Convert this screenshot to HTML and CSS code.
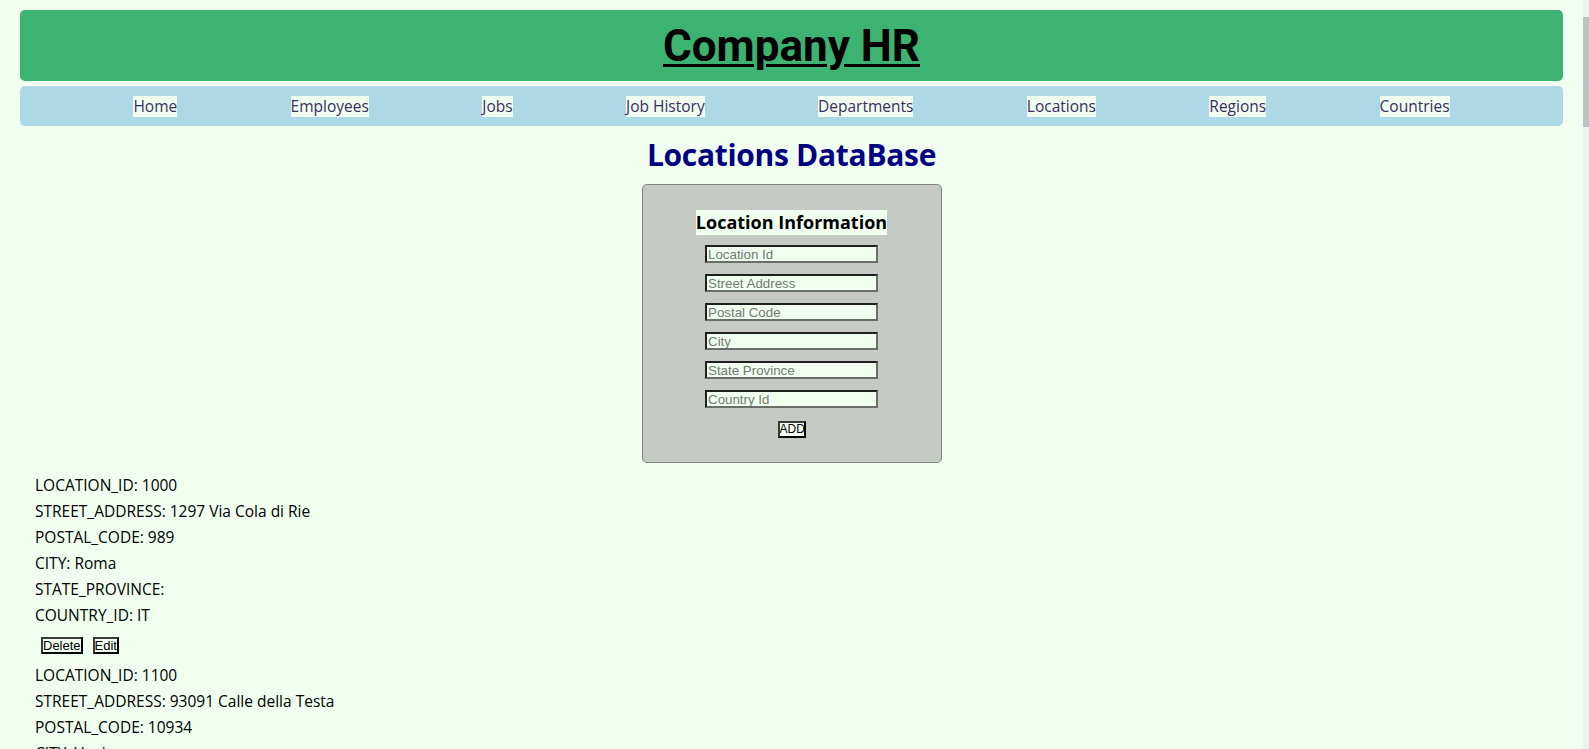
FILE: index.html
```html
<!DOCTYPE html>
<html lang="en">
<head>
<meta charset="utf-8">
<title>Company HR - Locations</title>
<link rel="stylesheet" href="styles.css">
</head>
<body>
<div class="scrollbar" aria-hidden="true"><div class="scrollbar-thumb"></div></div>
<div class="page">
  <header class="banner"><h1 class="brand">Company HR</h1></header>
  <nav class="menu">
    <a href="#" class="menu-link">Home</a>
    <a href="#" class="menu-link">Employees</a>
    <a href="#" class="menu-link">Jobs</a>
    <a href="#" class="menu-link">Job History</a>
    <a href="#" class="menu-link">Departments</a>
    <a href="#" class="menu-link">Locations</a>
    <a href="#" class="menu-link">Regions</a>
    <a href="#" class="menu-link">Countries</a>
  </nav>
  <main class="content">
    <h1 class="title">Locations DataBase</h1>
    <form class="card">
      <h3 class="card-title">Location Information</h3>
      <div class="fields">
        <input class="field" type="text" placeholder="Location Id">
        <input class="field" type="text" placeholder="Street Address">
        <input class="field" type="text" placeholder="Postal Code">
        <input class="field" type="text" placeholder="City">
        <input class="field" type="text" placeholder="State Province">
        <input class="field" type="text" placeholder="Country Id">
      </div>
      <button type="button" class="btn btn-add">ADD</button>
    </form>
    <section class="records">
      <div class="record"><p>LOCATION_ID: 1000</p><p>STREET_ADDRESS: 1297 Via Cola di Rie</p><p>POSTAL_CODE: 989</p><p>CITY: Roma</p><p>STATE_PROVINCE:</p><p>COUNTRY_ID: IT</p><div class="actions"><button type="button" class="btn">Delete</button><button type="button" class="btn">Edit</button></div></div>
      <div class="record"><p>LOCATION_ID: 1100</p><p>STREET_ADDRESS: 93091 Calle della Testa</p><p>POSTAL_CODE: 10934</p><p>CITY: Venice</p><p>STATE_PROVINCE:</p><p>COUNTRY_ID: IT</p><div class="actions"><button type="button" class="btn">Delete</button><button type="button" class="btn">Edit</button></div></div>
      <div class="record"><p>LOCATION_ID: 1200</p><p>STREET_ADDRESS: 2017 Shinjuku-ku</p><p>POSTAL_CODE: 1689</p><p>CITY: Tokyo</p><p>STATE_PROVINCE: Tokyo Prefecture</p><p>COUNTRY_ID: JP</p><div class="actions"><button type="button" class="btn">Delete</button><button type="button" class="btn">Edit</button></div></div>
      <div class="record"><p>LOCATION_ID: 1300</p><p>STREET_ADDRESS: 9450 Kamiya-cho</p><p>POSTAL_CODE: 6823</p><p>CITY: Hiroshima</p><p>STATE_PROVINCE:</p><p>COUNTRY_ID: JP</p><div class="actions"><button type="button" class="btn">Delete</button><button type="button" class="btn">Edit</button></div></div>
      <div class="record"><p>LOCATION_ID: 1400</p><p>STREET_ADDRESS: 2014 Jabberwocky Rd</p><p>POSTAL_CODE: 26192</p><p>CITY: Southlake</p><p>STATE_PROVINCE: Texas</p><p>COUNTRY_ID: US</p><div class="actions"><button type="button" class="btn">Delete</button><button type="button" class="btn">Edit</button></div></div>
      <div class="record"><p>LOCATION_ID: 1500</p><p>STREET_ADDRESS: 2011 Interiors Blvd</p><p>POSTAL_CODE: 99236</p><p>CITY: South San Francisco</p><p>STATE_PROVINCE: California</p><p>COUNTRY_ID: US</p><div class="actions"><button type="button" class="btn">Delete</button><button type="button" class="btn">Edit</button></div></div>
      <div class="record"><p>LOCATION_ID: 1600</p><p>STREET_ADDRESS: 2007 Zagora St</p><p>POSTAL_CODE: 50090</p><p>CITY: South Brunswick</p><p>STATE_PROVINCE: New Jersey</p><p>COUNTRY_ID: US</p><div class="actions"><button type="button" class="btn">Delete</button><button type="button" class="btn">Edit</button></div></div>
      <div class="record"><p>LOCATION_ID: 1700</p><p>STREET_ADDRESS: 2004 Charade Rd</p><p>POSTAL_CODE: 98199</p><p>CITY: Seattle</p><p>STATE_PROVINCE: Washington</p><p>COUNTRY_ID: US</p><div class="actions"><button type="button" class="btn">Delete</button><button type="button" class="btn">Edit</button></div></div>
      <div class="record"><p>LOCATION_ID: 1800</p><p>STREET_ADDRESS: 147 Spadina Ave</p><p>POSTAL_CODE: M5V 2L7</p><p>CITY: Toronto</p><p>STATE_PROVINCE: Ontario</p><p>COUNTRY_ID: CA</p><div class="actions"><button type="button" class="btn">Delete</button><button type="button" class="btn">Edit</button></div></div>
      <div class="record"><p>LOCATION_ID: 1900</p><p>STREET_ADDRESS: 6092 Boxwood St</p><p>POSTAL_CODE: YSW 9T2</p><p>CITY: Whitehorse</p><p>STATE_PROVINCE: Yukon</p><p>COUNTRY_ID: CA</p><div class="actions"><button type="button" class="btn">Delete</button><button type="button" class="btn">Edit</button></div></div>
      <div class="record"><p>LOCATION_ID: 2000</p><p>STREET_ADDRESS: 40-5-12 Laogianggen</p><p>POSTAL_CODE: 190518</p><p>CITY: Beijing</p><p>STATE_PROVINCE:</p><p>COUNTRY_ID: CN</p><div class="actions"><button type="button" class="btn">Delete</button><button type="button" class="btn">Edit</button></div></div>
      <div class="record"><p>LOCATION_ID: 2100</p><p>STREET_ADDRESS: 1298 Vileparle (E)</p><p>POSTAL_CODE: 490231</p><p>CITY: Bombay</p><p>STATE_PROVINCE: Maharashtra</p><p>COUNTRY_ID: IN</p><div class="actions"><button type="button" class="btn">Delete</button><button type="button" class="btn">Edit</button></div></div>
      <div class="record"><p>LOCATION_ID: 2200</p><p>STREET_ADDRESS: 12-98 Victoria Street</p><p>POSTAL_CODE: 2901</p><p>CITY: Sydney</p><p>STATE_PROVINCE: New South Wales</p><p>COUNTRY_ID: AU</p><div class="actions"><button type="button" class="btn">Delete</button><button type="button" class="btn">Edit</button></div></div>
      <div class="record"><p>LOCATION_ID: 2300</p><p>STREET_ADDRESS: 198 Clementi North</p><p>POSTAL_CODE: 540198</p><p>CITY: Singapore</p><p>STATE_PROVINCE:</p><p>COUNTRY_ID: SG</p><div class="actions"><button type="button" class="btn">Delete</button><button type="button" class="btn">Edit</button></div></div>
      <div class="record"><p>LOCATION_ID: 2400</p><p>STREET_ADDRESS: 8204 Arthur St</p><p>POSTAL_CODE:</p><p>CITY: London</p><p>STATE_PROVINCE:</p><p>COUNTRY_ID: UK</p><div class="actions"><button type="button" class="btn">Delete</button><button type="button" class="btn">Edit</button></div></div>
      <div class="record"><p>LOCATION_ID: 2500</p><p>STREET_ADDRESS: Magdalen Centre, The Oxford Science Park</p><p>POSTAL_CODE: OX9 9ZB</p><p>CITY: Oxford</p><p>STATE_PROVINCE: Oxford</p><p>COUNTRY_ID: UK</p><div class="actions"><button type="button" class="btn">Delete</button><button type="button" class="btn">Edit</button></div></div>
      <div class="record"><p>LOCATION_ID: 2600</p><p>STREET_ADDRESS: 9702 Chester Road</p><p>POSTAL_CODE: 09629850293</p><p>CITY: Stretford</p><p>STATE_PROVINCE: Manchester</p><p>COUNTRY_ID: UK</p><div class="actions"><button type="button" class="btn">Delete</button><button type="button" class="btn">Edit</button></div></div>
      <div class="record"><p>LOCATION_ID: 2700</p><p>STREET_ADDRESS: Schwanthalerstr. 7031</p><p>POSTAL_CODE: 80925</p><p>CITY: Munich</p><p>STATE_PROVINCE: Bavaria</p><p>COUNTRY_ID: DE</p><div class="actions"><button type="button" class="btn">Delete</button><button type="button" class="btn">Edit</button></div></div>
      <div class="record"><p>LOCATION_ID: 2800</p><p>STREET_ADDRESS: Rua Frei Caneca 1360</p><p>POSTAL_CODE: 01307-002</p><p>CITY: Sao Paulo</p><p>STATE_PROVINCE: Sao Paulo</p><p>COUNTRY_ID: BR</p><div class="actions"><button type="button" class="btn">Delete</button><button type="button" class="btn">Edit</button></div></div>
      <div class="record"><p>LOCATION_ID: 2900</p><p>STREET_ADDRESS: 20 Rue des Corps-Saints</p><p>POSTAL_CODE: 1730</p><p>CITY: Geneva</p><p>STATE_PROVINCE: Geneve</p><p>COUNTRY_ID: CH</p><div class="actions"><button type="button" class="btn">Delete</button><button type="button" class="btn">Edit</button></div></div>
      <div class="record"><p>LOCATION_ID: 3000</p><p>STREET_ADDRESS: Murtenstrasse 921</p><p>POSTAL_CODE: 3095</p><p>CITY: Bern</p><p>STATE_PROVINCE: BE</p><p>COUNTRY_ID: CH</p><div class="actions"><button type="button" class="btn">Delete</button><button type="button" class="btn">Edit</button></div></div>
      <div class="record"><p>LOCATION_ID: 3100</p><p>STREET_ADDRESS: Pieter Breughelstraat 837</p><p>POSTAL_CODE: 3029SK</p><p>CITY: Utrecht</p><p>STATE_PROVINCE: Utrecht</p><p>COUNTRY_ID: NL</p><div class="actions"><button type="button" class="btn">Delete</button><button type="button" class="btn">Edit</button></div></div>
      <div class="record"><p>LOCATION_ID: 3200</p><p>STREET_ADDRESS: Mariano Escobedo 9991</p><p>POSTAL_CODE: 11932</p><p>CITY: Mexico City</p><p>STATE_PROVINCE: Distrito Federal,</p><p>COUNTRY_ID: MX</p><div class="actions"><button type="button" class="btn">Delete</button><button type="button" class="btn">Edit</button></div></div>
    </section>
  </main>
</div>
</body>
</html>
```
FILE: styles.css
```css
html {
  background: #f0fff0;
}
body {
  margin: 0;
  background: #f0fff0;
  font-family: "Open Sans", "Noto Sans", sans-serif;
  color: #000;
}
.scrollbar {
  position: fixed;
  top: 0;
  right: 0;
  bottom: 0;
  width: 6px;
  background: #f0f0f0;
  z-index: 10;
}
.scrollbar-thumb {
  margin-top: 17px;
  height: 110px;
  background: #c1c1c1;
}
.page {
  padding: 10px 26px 20px 20px;
}
.banner {
  height: 71px;
  background: #3cb371;
  border-radius: 5px;
  display: flex;
  align-items: center;
  justify-content: center;
}
.brand {
  margin: 0;
  font-family: Roboto, "Liberation Sans", sans-serif;
  font-weight: bold;
  font-size: 44px;
  line-height: 50px;
  color: #000;
  text-decoration: underline;
  text-decoration-thickness: 3px;
  text-underline-offset: 3px;
}
.menu {
  margin-top: 5px;
  height: 40px;
  background: #add8e6;
  border-radius: 5px;
  display: flex;
  align-items: center;
  justify-content: space-evenly;
}
.menu-link {
  display: inline-block;
  background: #f0fff0;
  color: #3d2b63;
  text-decoration: none;
  font-size: 15.5px;
  line-height: 21px;
  margin-top: 1px;
}
.content {
  display: flex;
  flex-direction: column;
}
.title {
  margin: 10px 0 0;
  text-align: center;
  font-size: 30px;
  letter-spacing: -0.3px;
  line-height: 38px;
  font-weight: bold;
  color: #000080;
}
.card {
  align-self: center;
  box-sizing: border-box;
  width: 300px;
  height: 279px;
  margin-top: 10px;
  background: #c5cac5;
  border: 1px solid #7d827d;
  border-radius: 5px;
  display: flex;
  flex-direction: column;
  align-items: center;
}
.card-title {
  margin: 25px 0 10px;
  background: #f0fff0;
  font-size: 18px;
  line-height: 25px;
  font-weight: bold;
}
.fields {
  display: flex;
  flex-direction: column;
  gap: 11px;
}
.field {
  box-sizing: border-box;
  width: 173px;
  height: 18px;
  margin: 0;
  padding: 0 1px;
  background: #f0fff0;
  border: 2px solid;
  border-color: #1f1f1f #6a6d6a #6a6d6a #1f1f1f;
  font-family: "Liberation Sans", Arial, sans-serif;
  font-size: 13.33px;
  outline: none;
}
.field::placeholder {
  color: #757875;
}
.btn {
  box-sizing: border-box;
  height: 17px;
  margin: 0;
  padding: 0;
  background: #f4fff4;
  border: 2px solid;
  border-color: #3a3a3a #000 #000 #3a3a3a;
  font-family: "Liberation Sans", Arial, sans-serif;
  font-size: 13px;
  line-height: 13px;
  color: #000;
}
.btn-add {
  margin-top: 13px;
  width: 28px;
  font-size: 12px;
}
.records {
  margin-top: 9px;
  padding-left: 15px;
}
.record p {
  margin: 0;
  font-size: 15.5px;
  line-height: 26px;
}
.actions {
  display: flex;
  gap: 10px;
  padding: 9px 0 8px 6px;
}
```
